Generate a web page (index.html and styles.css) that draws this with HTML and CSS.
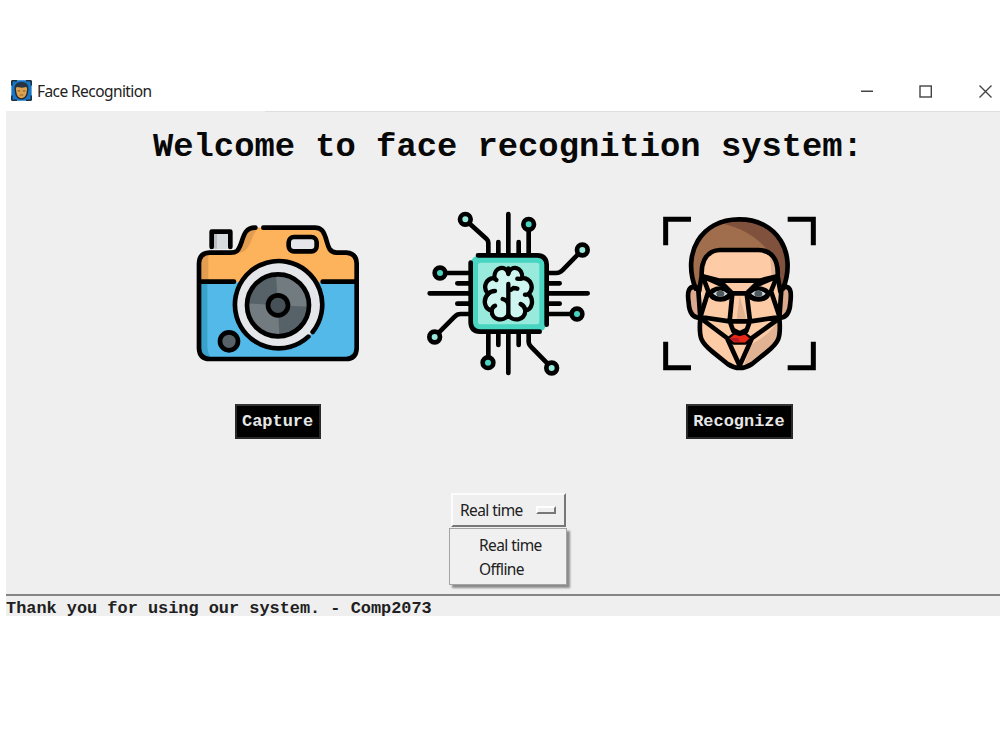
FILE: index.html
```html
<!DOCTYPE html>
<html lang="en">
<head>
<meta charset="utf-8">
<title>Face Recognition</title>
<link rel="stylesheet" href="styles.css">
</head>
<body>
<div class="window">
  <header class="titlebar">
    <svg class="app-icon" viewBox="0 0 60 60">
      <rect x="1" y="1" width="58" height="58" rx="6" fill="#1677c8"/>
      <path d="M2 16V6Q2 2 6 2H17M43 2H54Q58 2 58 6V16M2 44V54Q2 58 6 58H17M43 58H54Q58 58 58 54V44" fill="none" stroke="#202f3d" stroke-width="5"/>
      <path d="M12 25Q12 8 30 8T48 25L46 40Q42 53 30 54Q18 53 14 40Z" fill="#dda252" stroke="#29292b" stroke-width="4"/>
      <path d="M11 25Q12 8 30 7Q48 8 49 25L43 20L32 22L17 20Z" fill="#263645"/>
      <path d="M19 31H26M34 31H41M25 43H35" stroke="#8d632c" stroke-width="3"/>
    </svg>
    <h1 class="title">Face Recognition</h1>
    <svg class="controls" viewBox="0 0 160 42" fill="none" stroke="#444" stroke-width="1.4">
      <path d="M21 21.3H33M139.5 15.5L151.5 27.5M151.5 15.5L139.5 27.5"/>
      <rect x="80" y="16" width="11.3" height="11"/>
    </svg>
  </header>
  <main class="content">
    <div class="edge"></div>
    <h2 class="welcome">Welcome to face recognition system:</h2>
    <div class="pictures">
      <svg class="camera" viewBox="0 0 555 465">
        <path d="M80 102V52H136V102" fill="#d8dbde"/>
        <path d="M80 56H96V101H80Z" fill="#b9bdc2"/>
        <path d="M42 202V145Q43 114 74 113H138C175 112 164 40 208 38H390C432 38 414 112 455 113H484Q514 115 515 145V202Z" fill="#fdb35c"/>
        <path d="M42 202V145Q43 118 70 114V202ZM138 113C175 112 164 40 208 38H226C196 46 204 112 160 113Z" fill="#e39d50"/>
        <path d="M42 202H515V400Q514 431 483 432H74Q43 431 42 400Z" fill="#52b9e9"/>
        <path d="M42 202H67V390Q67 421 82 432H74Q43 431 42 400Z" fill="#3aa1ca"/>
        <circle cx="279" cy="271" r="131" fill="#e4e6e9"/>
        <circle cx="279" cy="271" r="92" fill="#566268"/>
        <path d="M279 271L273 179A92 92 0 0 1 371 275ZM279 271L187 265A92 92 0 0 0 283 363Z" fill="#717b80"/>
        <g fill="none" stroke="#000" stroke-width="14" stroke-linecap="round" stroke-linejoin="round">
          <path d="M80 96V50H136V96M211 38C168 37 177 86 156 108Q150 113 137 113H74Q43 114 42 145V400Q43 431 74 432H483Q514 431 515 400V145Q514 115 484 113H455C421 112 431 70 411 46Q403 38 389 38H235M42 200H147M413 200H515"/>
          <path d="M370 365A131 131 0 1 1 383 351"/>
          <circle cx="279" cy="271" r="93"/>
          <circle cx="279" cy="271" r="30" fill="#465157"/>
          <circle cx="132" cy="379" r="27" fill="#566268"/>
          <rect x="311" y="66" width="84" height="43" rx="16" fill="#e4e6e9"/>
        </g>
      </svg>
      <svg class="chip" viewBox="0 0 540 525">
        <rect x="152" y="151" width="228" height="229" rx="26" fill="#48d5c1"/>
        <rect x="174" y="173" width="184" height="185" rx="8" fill="#98eadd"/>
        <g fill="none" stroke="#000" stroke-width="14" stroke-linecap="round" stroke-linejoin="round">
          <path d="M152 173V352Q153 379 180 380H359M174 151H352Q379 152 380 179V359"/>
          <path d="M265 27V145M265 386V504M235 111V145M296 111V145M235 386V420M296 386V420M29 265H146M386 265H503M112 235H146M112 296H146M386 235H419M386 296H419"/>
          <path d="M205 145V114Q205 107 199 101L150 57M326 145V78M386 204H409Q420 204 427 196L473 149M386 327H451M326 386V411Q326 418 332 424L382 475M205 386V452M146 327H122Q111 327 104 335L57 382M146 204H80"/>
        </g>
        <g stroke="#000" stroke-width="14">
          <g fill="#98eadd"><circle cx="136" cy="43" r="16"/><circle cx="487" cy="135" r="16"/><circle cx="395" cy="489" r="16"/><circle cx="44" cy="396" r="16"/></g>
          <g fill="#48d5c1"><circle cx="326" cy="58" r="16"/><circle cx="60" cy="204" r="16"/><circle cx="471" cy="327" r="16"/><circle cx="204" cy="473" r="16"/></g>
        </g>
        <g fill="#cef5ef" stroke="#000" stroke-width="13" stroke-linecap="round" stroke-linejoin="round">
          <path d="M265 205C257 180 222 184 223 219C197 220 187 248 204 267C187 285 194 313 215 317C215 348 253 351 265 329C277 351 315 348 316 317C337 313 343 285 326 267C344 248 333 220 307 219C308 184 273 180 265 205Z"/>
          <path fill="none" d="M265 190V207M265 237V329M265 258Q276 254 280 249Q285 249 292 251M265 301Q264 286 248 282M223 219Q225 223 229 225M307 219Q300 223 292 221M204 267Q212 258 225 258M326 267Q321 270 315 269M215 317Q216 306 225 302M316 317Q315 304 302 297"/>
        </g>
      </svg>
      <svg class="face" viewBox="0 0 510 510">
        <path d="M129 240C102 230 94 252 101 280Q103 326 134 331ZM377 240C404 230 413 252 406 280Q405 326 374 331Z" fill="#dda98e"/>
        <path d="M121 242C89 135 138 35 254 34S421 135 386 242L372 250L136 250Z" fill="#a16e4d"/>
        <path d="M205 47C290 67 350 120 370 190V248L386 242C420 135 370 35 254 34Q226 36 205 47Z" fill="#80513c"/>
        <path d="M141 210C137 153 158 128 195 126H310C348 126 371 153 368 210L372 331Q378 398 342 428L291 464Q254 492 218 464L172 428Q130 398 138 331Z" fill="#fdcba6"/>
        <path d="M366 338Q351 376 288 410L266 474Q280 475 295 463L342 428Q374 400 370 338ZM345 145Q367 160 368 210L350 206ZM254 264L274 334H245Z" fill="#e2b393"/>
        <g fill="none" stroke="#000" stroke-width="14" stroke-linecap="round" stroke-linejoin="round">
          <path d="M122 242C80 135 138 35 252 34S427 135 384 242M132 251L140 204C138 154 158 128 195 126H310C348 126 371 153 368 204L376 251"/>
          <path d="M129 239C100 229 96 251 101 284Q103 328 134 330M379 239C408 229 410 251 406 284Q404 328 374 330"/>
          <path d="M130 246L136 330C130 393 140 405 172 431L218 468Q254 492 291 468L337 431C369 405 379 393 373 330L379 246"/>
          <path d="M143 205L195 218H313L367 205M143 205L209 234L232 256H275L298 234L367 205M145 210L160 250L136 327L223 340H286L374 327L348 250L364 210M232 256L224 339L235 369M275 256L285 339L274 369M136 330L216 390L254 473L291 390L374 330M235 366L254 376L274 366M195 218L209 234M313 218L298 234"/>
        </g>
        <ellipse cx="196" cy="258" rx="36" ry="23"/>
        <ellipse cx="310" cy="258" rx="36" ry="23"/>
        <path d="M174 257Q196 238 218 257Q196 276 174 257ZM288 257Q310 238 332 257Q310 276 288 257Z" fill="#d3dade"/>
        <ellipse cx="196" cy="257" rx="12" ry="9" fill="#4e585f"/><ellipse cx="310" cy="257" rx="12" ry="9" fill="#4e585f"/>
        <path d="M218 391L238 376L254 381L271 376L289 391L272 407H236Z" fill="#e52818" stroke="#000" stroke-width="7" stroke-linejoin="round"/>
        <path d="M224 390H249L255 401H239Z" fill="#b71929"/>
        <path d="M108 34H32V112M398 34H475V112M32 401V479H108M475 401V479H398" fill="none" stroke="#000" stroke-width="15"/>
      </svg>
    </div>
    <div class="actions">
      <button class="button">Capture</button>
      <button class="button">Recognize</button>
    </div>
    <div class="selector">
      <button class="select">Real time <span class="indicator"></span></button>
      <ul class="menu">
        <li>Real time</li>
        <li>Offline</li>
      </ul>
    </div>
  </main>
  <footer class="status">Thank you for using our system. - Comp2073</footer>
</div>
</body>
</html>
```
FILE: styles.css
```css
* { box-sizing: border-box; }
body { margin: 0; background: #fff; overflow: hidden; }
.window { width: 1000px; height: 750px; padding-top: 70px; }
.titlebar { display: flex; height: 41px; padding-left: 11px; align-items: center; }
.app-icon { width: 21px; height: 21px; }
.title { margin: 1px 0 0 5px; font: 15.5px "Noto Sans", sans-serif; letter-spacing: -0.58px; color: #222; white-space: nowrap; }
.controls { width: 160px; height: 42px; margin-left: auto; }
.content { display: flex; flex-direction: column; height: 483px; margin-left: 6px; background: #efefef; }
.edge { height: 1px; margin-left: 259px; background: #dedede; }
.welcome { margin: 15px 0 0 147px; height: 40px; font: bold 33.8px/40px "Liberation Mono", monospace; color: #080808; white-space: nowrap; }
.pictures { display: flex; height: 226px; padding: 38px 0 0 179px; align-items: flex-start; }
.camera { width: 185px; height: 155px; margin-top: 10px; }
.chip { width: 180px; height: 175px; margin-left: 50px; }
.face { width: 170px; height: 170px; margin: 3px 0 0 55px; }
.actions { display: flex; gap: 365px; padding: 11px 0 0 229px; }
.button { height: 35px; padding: 0 6px 0 5px; border: 2px solid #292929; border-top-color: #343434; background: #000; color: #e6e6e6; font: bold 16.95px/30px "Liberation Mono", monospace; }
.selector { display: flex; flex-direction: column; padding: 54px 0 0 443px; }
.select { display: flex; align-items: center; justify-content: space-between; width: 115px; height: 34px; margin-left: 2px; padding: 0 8px 1px 7px; border: 2px solid; border-color: #fcfcfc #777 #777 #fcfcfc; background: #efefef; color: #202020; font: 15.5px "Noto Sans", sans-serif; letter-spacing: -0.58px; }
.indicator { width: 20px; height: 8px; border: 2px solid; border-color: #fff #777 #777 #fff; }
.menu { width: 118px; height: 57px; margin: 1px 0 0; padding: 4px 0 0 29px; border: 1px solid #a4a4a4; background: #f0f0f0; box-shadow: 3px 3px 2px #8b8b8b; list-style: none; font: 15.5px/24px "Noto Sans", sans-serif; letter-spacing: -0.58px; color: #202020; }
.status { height: 22px; margin-left: 6px; padding-top: 3px; border-top: 2px solid #858585; background: #efefef; font: bold 16.9px/19px "Liberation Mono", monospace; color: #202020; white-space: nowrap; }
```
